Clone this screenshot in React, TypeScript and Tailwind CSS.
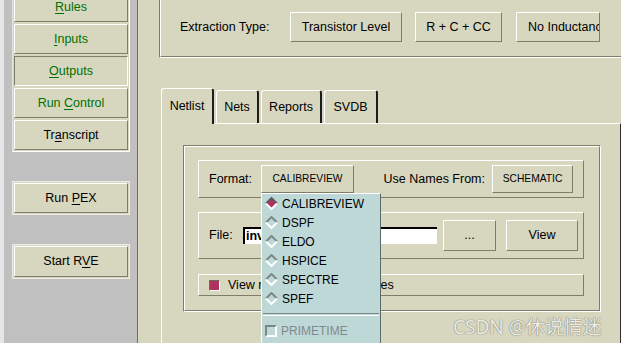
import React from 'react';

const raised = 'border border-t-white border-l-white border-b-[#7d7d6a] border-r-[#7d7d6a]';
const sunken = 'border border-t-[#7d7d6a] border-l-[#7d7d6a] border-b-white border-r-white';

function U({ children }: { children: React.ReactNode }) {
  return <span className="underline underline-offset-2">{children}</span>;
}

function SideButton({ children, green, down }: { children: React.ReactNode; green?: boolean; down?: boolean }) {
  return (
    <div
      className={`flex h-[30px] w-[114px] items-center justify-center bg-[#d7d7c0] text-[12.5px] ${down ? sunken : raised} ${
        green ? 'text-[#007000]' : 'text-black'
      }`}
    >
      <span className="whitespace-pre">{children}</span>
    </div>
  );
}

function Diamond({ on }: { on?: boolean }) {
  return (
    <svg width="13" height="13" viewBox="0 0 13 13">
      <polygon points="6.5,1 12,6.5 6.5,12 1,6.5" fill={on ? '#b03060' : '#bed8d8'} />
      <polyline points="1,6.5 6.5,1 12,6.5" fill="none" stroke={on ? '#5c5c5c' : '#7b8888'} strokeWidth="2" />
      <polyline points="1,6.5 6.5,12 12,6.5" fill="none" stroke="#ffffff" strokeWidth="2" />
    </svg>
  );
}

function Tab({ label, width, active }: { label: string; width: string; active?: boolean }) {
  return (
    <div
      className={`flex items-center justify-center rounded-t-[3px] border-l border-t border-r-2 border-l-white border-t-white border-r-[#1c1c1c] bg-[#d7d7c0] text-[12.5px] ${width} ${
        active ? 'relative z-10 -mb-px h-[36px]' : 'h-[33px]'
      }`}
    >
      {label}
    </div>
  );
}

export default function App() {
  const formats = ['CALIBREVIEW', 'DSPF', 'ELDO', 'HSPICE', 'SPECTRE', 'SPEF'];

  return (
    <div className="relative flex h-[343px] w-[621px] overflow-hidden bg-[#d7d7c0] text-black [font-family:'Liberation_Sans',Arial,sans-serif]">
      {/* left strip */}
      <div className="w-[4px] bg-[#e6e6e6]" />
      <div className="w-[134px] border-r border-r-[#6e6e6e] bg-[#c0c0c0]">
        <div className="ml-[8px] mt-[-10px] flex w-[118px] flex-col gap-[2px] border border-l-[#e4e4dc] border-r-white border-b-white border-t-[#e4e4dc] bg-[#d7d7c0] p-px">
          <SideButton green>
            <U>R</U>ules
          </SideButton>
          <SideButton green>
            <U>I</U>nputs
          </SideButton>
          <SideButton green down>
            <U>O</U>utputs
          </SideButton>
          <SideButton green>
            {'Run '}
            <U>C</U>ontrol
          </SideButton>
          <SideButton>
            Tr<U>a</U>nscript
          </SideButton>
        </div>

        <div className="ml-[8px] mt-[29px] w-[118px] border border-[#ecece2] bg-[#d7d7c0] p-px">
          <div className={`flex h-[30px] items-center justify-center text-[12.5px] ${raised}`}>
            <span className="whitespace-pre">
              {'Run '}
              <U>P</U>EX
            </span>
          </div>
        </div>
        <div className="ml-[8px] mt-[29px] w-[118px] border border-[#ecece2] bg-[#d7d7c0] p-px">
          <div className={`flex h-[31px] items-center justify-center text-[12.5px] ${raised}`}>
            <span className="whitespace-pre">
              {'Start R'}
              <U>V</U>E
            </span>
          </div>
        </div>
      </div>

      {/* right area */}
      <div className="min-w-0 flex-1 overflow-hidden">
        <div className={`ml-[21px] mt-[-10px] h-[68px] w-[500px] ${sunken}`}>
          <div className={`flex h-full items-start pl-[19px] pt-[20px] ${raised}`}>
            <div className="flex h-[30px] w-[110px] items-center text-[12.5px]">Extraction Type:</div>
            <div className={`flex h-[30px] w-[112px] items-center justify-center text-[12.5px] ${raised}`}>Transistor Level</div>
            <div className={`ml-[13px] flex h-[30px] w-[87px] items-center justify-center text-[12.5px] ${raised}`}>R + C + CC</div>
            <div className={`ml-[14px] flex h-[30px] w-[84px] items-center overflow-hidden whitespace-nowrap pl-[11px] text-[12.5px] ${raised}`}>
              No Inductance
            </div>
          </div>
        </div>

        <div className="ml-[23px] mt-[30px] flex items-end gap-[2px]">
          <Tab label="Netlist" width="w-[53px]" active />
          <Tab label="Nets" width="w-[43px]" />
          <Tab label="Reports" width="w-[61px]" />
          <Tab label="SVDB" width="w-[54px]" />
        </div>

        <div className="ml-[23px] h-[240px] w-[460px] border-l border-t border-r border-l-white border-t-white border-r-[#303030] pl-[21px] pt-[21px]">
          <div className={`h-[167px] w-[418px] ${sunken}`}>
            <div className={`h-full pl-[13px] pt-[13px] ${raised}`}>
              <div className={`flex h-[38px] w-[386px] items-center pl-[10px] pr-[10px] ${raised}`}>
                <span className="w-[52px] text-[12.5px]">Format:</span>
                <div className={`flex h-[28px] w-[93px] items-center justify-center text-[10.25px] ${raised}`}>CALIBREVIEW</div>
                <span className="ml-auto mr-[7px] text-[12.5px]">Use Names From:</span>
                <div className={`flex h-[28px] w-[81px] items-center justify-center text-[10.25px] ${raised}`}>SCHEMATIC</div>
              </div>

              <div className={`mt-[14px] flex h-[47px] w-[386px] items-center pl-[10px] ${raised}`}>
                <span className="w-[34px] text-[12.5px]">File:</span>
                <div className="flex h-[17px] w-[194px] items-center overflow-hidden border-l-2 border-t-2 border-l-black border-t-black bg-white pl-px text-[12.5px] font-bold">
                  invs_netlist.pex
                </div>
                <div className={`ml-[6px] flex h-[31px] w-[53px] items-center justify-center text-[12.5px] ${raised}`}>...</div>
                <div className={`ml-[10px] flex h-[31px] w-[72px] items-center justify-center text-[12.5px] ${raised}`}>View</div>
              </div>

              <div className={`mt-[15px] flex h-[22px] w-[386px] items-center pl-[10px] ${raised}`}>
                <div className="h-[11px] w-[11px] border border-t-[#6c6c5c] border-l-[#6c6c5c] border-b-white border-r-white bg-[#b03060]" />
                <span className="ml-[8px] whitespace-nowrap text-[12.5px]">View netlist after PEX finishes</span>
              </div>
            </div>
          </div>
        </div>
      </div>

      {/* format menu */}
      <div className="absolute left-[261px] top-[193px] h-[160px] w-[120px] border-l border-t border-r border-l-white border-t-white border-r-[#5c6a6a] bg-[#bed8d8]">
        {formats.map((f, i) => (
          <div key={f} className="flex h-[19px] items-center gap-[4px] pl-[3px] text-[12px]">
            <Diamond on={i === 0} />
            {f}
          </div>
        ))}
        <div className="mx-px mt-[5px] h-[3px] border-t border-b border-t-[#7b8888] border-b-white" />
        <div className="mt-[5px] flex h-[19px] items-center gap-[4px] pl-[3px] text-[12px] text-[#7f8a8a]">
          <div className="h-[12px] w-[12px] border-2 border-t-[#7b8888] border-l-[#7b8888] border-b-white border-r-white" />
          PRIMETIME
        </div>
      </div>

      {/* watermark */}
      <div className="absolute left-[453px] top-[313px] whitespace-nowrap text-[19px] text-[#ececE4] [font-family:'Noto_Sans','Noto_Sans_CJK_SC',sans-serif] [text-shadow:0_0_1px_#7a7a70,0_0_1px_#7a7a70]">
        CSDN @休说情迷
      </div>
    </div>
  );
}
